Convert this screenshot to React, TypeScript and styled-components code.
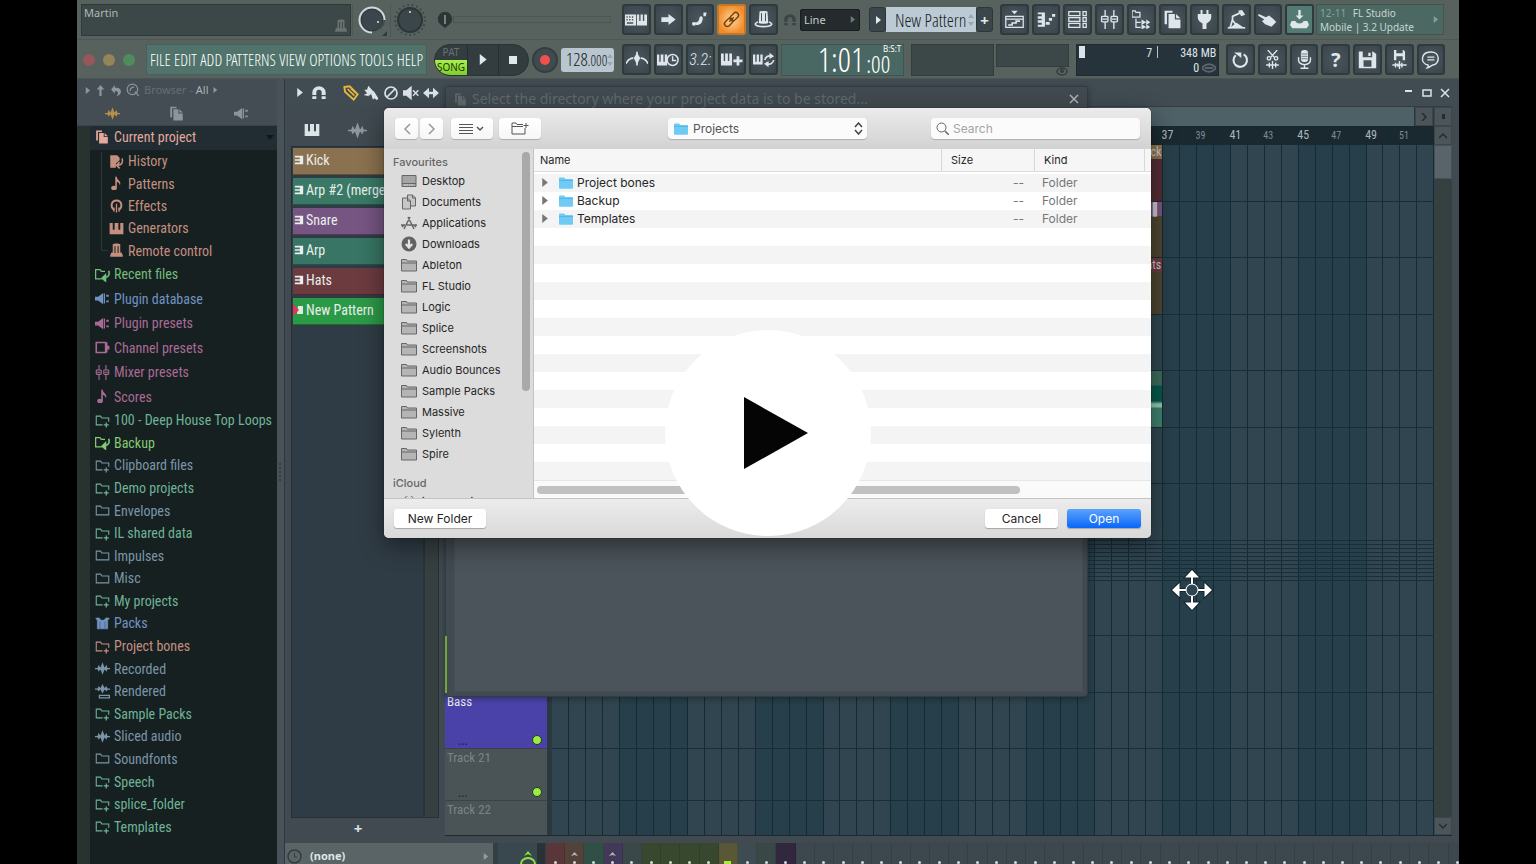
import React from "react";
import styled, { createGlobalStyle } from "styled-components";

const narrow = `"Roboto Condensed", Roboto, sans-serif`;
const slim = `"Open Sans Condensed Light", "Roboto Condensed", sans-serif`;
const wide = `"Noto Sans", "Open Sans", sans-serif`;
const mac = `Inter, "Liberation Sans", sans-serif`;

const Global = createGlobalStyle`
  * { box-sizing: border-box; }
  html, body { margin: 0; background: #000; }
  body { font-family: ${wide}; font-size: 12px; color: #dfe7e9; overflow: hidden; }
  button, input, select { font: inherit; color: inherit; margin: 0; padding: 0; border: 0; background: none; }
  ul { list-style: none; margin: 0; padding: 0; }
  a { color: inherit; text-decoration: none; }
  svg { display: block; flex: none; }
`;

/* ---------- icons ---------- */

const glyphs: Record<string, React.ReactNode> = {
  keyboardPiano: (<g fill="currentColor"><path d="M0 6h12v12H0z M1.5 8v1.5H3V8z M4.5 8v1.5H6V8z M7.500 8v1.500H9V8z M1.500 11v1.500H3V11z M4.500 11v1.500H6V11z M7.500 11v1.500H9V11z M2 14.500V16h7v-1.500z" fillRule="evenodd" /><path d="M13 6h2.500v7h1.500V6h2.500v7H21V6h3v12H13z" /></g>),
  arrowRight: <path d="M3 9h9V5l9 7-9 7v-4H3z" fill="currentColor" />,
  slide: (<g fill="currentColor"><path d="M4 16c5 0 7-1 8-6h4c0 7-4 9-8 9z" /><circle cx="5" cy="17.500" r="2.500" /><path d="M17 3h4l-1 5h-3z" /><circle cx="14" cy="10" r="2" /></g>),
  link: (<g fill="none" stroke="currentColor" strokeWidth="1.800" transform="rotate(-45 12 12)"><rect x="1" y="8.500" width="12" height="7" rx="3.500" /><rect x="11" y="8.500" width="12" height="7" rx="3.500" /><path d="M8 12h8" /></g>),
  hat: (<g><path d="M7 2c2-1 8-1 10 0l1 14c1 2-13 2-12 0z" fill="currentColor" /><path d="M5 15c-7 3-2 6 7 6s14-3 7-6" fill="none" stroke="currentColor" strokeWidth="2" /><path d="M9.500 4v10M14.500 4v10" stroke="#39434a" strokeWidth="1.200" /></g>),
  hatFlat: (<g><path d="M6 2c2-1.500 10-1.500 12 0v13h2l2 4v3H2v-3l2-4h2z" fill="currentColor" /><path d="M9.500 5v11M14.500 5v11" stroke="#3c4747" strokeWidth="1.600" /></g>),
  remote: (<g><path d="M6 2c2-1.500 10-1.500 12 0v13h2l2 4v3H2v-3l2-4h2z" fill="currentColor" /><path d="M9.500 5v11M14.500 5v11" stroke="#162021" strokeWidth="1.600" /></g>),
  metronome: (<g fill="none" stroke="currentColor" strokeWidth="1.800"><path d="M0 16c2-4 5-6 8-6M24 16c-2-4-5-6-8-6" /><path d="M12 3v15" /><path d="M12 6l2.500 4-2.500 5-2.500-5z" fill="currentColor" /></g>),
  pianoClock: (<g><path d="M0 6h2.500v8H4V6h3v8h1.500V6H11v12H0z" fill="currentColor" /><circle cx="17" cy="12" r="6" fill="none" stroke="currentColor" strokeWidth="1.600" /><path d="M17 8v4.500h4" fill="none" stroke="currentColor" strokeWidth="1.500" /></g>),
  pianoPlus: (<g fill="currentColor"><path d="M0 5h3v8h1.500V5h3v8H9V5h3v13H0z" /><path d="M17 8h3v3.500h3.500v3H20V18h-3v-3.500h-3.500v-3H17z" /></g>),
  pianoLoop: (<g><path d="M0 6h2.500v8H4V6h2.500v8H8V6h2.500v11H0z" fill="currentColor" /><path d="M13 12a5 5 0 0 1 7-4M22.500 12a5 5 0 0 1-7 4" fill="none" stroke="currentColor" strokeWidth="1.800" /><path d="M18 4l5 4-5 3zM17 20l-5-4 5-3z" fill="currentColor" /></g>),
  magnet: <path d="M3 20v-8a9 9 0 0 1 18 0v8h-6v-8a3 3 0 0 0-6 0v8z" fill="currentColor" />,
  magnetTipped: (<g fill="currentColor"><path d="M2 15v-4a10 9 0 0 1 20 0v4h-6v-4a4 4 0 0 0-8 0v4z" /><path d="M2 17h6v4H2zM16 17h6v4h-6z" /></g>),
  playlist: (<g fill="none" stroke="currentColor" strokeWidth="1.600"><path d="M1 8h22v14H1zM1 11.500h22" /><path d="M4 19h5v-2.500h5V14h5" strokeWidth="2" /><path d="M8 1h8l-4 4.500z" fill="currentColor" stroke="none" /></g>),
  pianoRoll: (<g fill="currentColor"><path d="M1 3h9v18H1v-2.500h5v-2.500H1V13h5v-2H1V8h5V5.500H1z" /><path d="M11 15h5v3.500h-5zM15 10h4v3.500h-4zM19 5h4v3.500h-4z" /></g>),
  rack: (<g fill="none" stroke="currentColor" strokeWidth="1.600"><path d="M1 2h14v5H1zM1 9.500h14v5H1zM1 17h14v5H1zM19 2h4v5h-4zM19 9.500h4v5h-4zM19 17h4v5h-4z" /></g>),
  mixer: (<g fill="none" stroke="currentColor" strokeWidth="1.700"><path d="M6.500 0v8M6.500 15v9M17.500 0v8M17.500 15v9" /><rect x="2" y="8" width="8" height="7" rx="1" /><rect x="14" y="8" width="8" height="7" rx="1" /><path d="M3 11.500h6M15 11.500h6" /></g>),
  tree: (<g fill="none" stroke="currentColor" strokeWidth="1.600"><path d="M0 1h4l1 2h5v6H0zM5 11v11h6M5 15.500h6" /><path d="M12 12l6 3.500-6 3.500zM18 12l5 3.500-5 3.500zM12 18l6 3.500-6 3zM18 18l5 3.500-5 3z" fill="currentColor" stroke="none" /></g>),
  docs: (<g fill="currentColor"><path d="M2 1h10v2.500H5V18H2z" /><path d="M7 5h8v7h7v11H7z" /><path d="M16.500 5L22 10.500h-5.500z" /></g>),
  plug: (<path d="M7 0h2.500v5h5V0H17v5h3.500v4c0 4-3 6-6 8v7h-5v-7c-3-2-6-4-6-8V5H7z" fill="currentColor" />),
  crane: (<g fill="none" stroke="currentColor" strokeWidth="2.200"><path d="M18 3L7 8v5l4 5M7 12L4 22" /><path d="M14 1l5-1 4 6-5 2z" fill="currentColor" stroke="none" /><path d="M1 22.500h22" strokeWidth="2" /><path d="M4 22l8-6 9 6z" fill="currentColor" stroke="none" /></g>),
  hand: (<path d="M1 5l9 4 4-2 5 4 4 4-6 6-8-3-4-4 3-2-8-5z" fill="currentColor" />),
  download: (<g fill="currentColor"><path d="M10.500 0h3v7H17l-5 5-5-5h3.500z" /><path d="M2 14h5c0 4 10 4 10 0h5l2 5-3 4H3l-3-4z" /></g>),
  undo: (<g><path d="M6 6.500a8.500 8.500 0 1 0 10-1" fill="none" stroke="currentColor" strokeWidth="2.600" /><path d="M4 3h9v7z" fill="currentColor" /></g>),
  cut: (<g fill="none" stroke="currentColor" strokeWidth="1.700"><path d="M6 0l8 9M18 0l-8 9" /><circle cx="7.500" cy="10.500" r="2.200" /><circle cx="16.500" cy="10.500" r="2.200" /><path d="M4 19h16M8 16v6M12 14v10M16 16v6" /></g>),
  mic: (<g><rect x="7.500" y="0" width="9" height="15" rx="4" fill="currentColor" /><path d="M4.500 9v4a7.500 5.500 0 0 0 15 0V9M12 18v5M7 23h10" fill="none" stroke="currentColor" strokeWidth="1.800" /><path d="M8 5h8M8 8h8M8 11h8" stroke="#5a666d" /></g>),
  save: (<path d="M1 2h18l4 3v18H1zM6 2v7h12V2zM5 13v10M7 13v8h10v-8zM13 3.500h3v4h-3z" fill="currentColor" fillRule="evenodd" />),
  saveWave: (<g><path d="M5 0h12l2 2v11H5zM8 0v4h8V0zM8 8v5h8V8z" fill="currentColor" fillRule="evenodd" /><path d="M3 19h18M7 16v6M10 17v4M12 14v10M15 16v6M18 18v2" stroke="currentColor" strokeWidth="1.800" /></g>),
  chat: (<g fill="none" stroke="currentColor" strokeWidth="1.800"><path d="M9 19c-10-2-10-16 3-16.500S24 18 15 19c-2 .5-4 3-7 3.500 1-1 1.500-2.500 1-3.500z" /><path d="M8 9h9M8 12.500h9" /></g>),
  up: <path d="M12 2l7 8h-5v12h-4V10H5z" fill="currentColor" />,
  back: (<path d="M9 2v5c8-1 12 3 11 8-1 5-4 6-8 7 4-4 4-9-3-9v5L2 10z" fill="currentColor" />),
  searchDoc: (<g fill="none" stroke="currentColor" strokeWidth="2"><circle cx="11" cy="11" r="9" /><path d="M15 15l7 7M7 14c0-5 3-7 7-7" /></g>),
  wave: (<path d="M0 11h4l2-5 2 4h1l3-8 3 8h1l2-4 2 5h4v2h-4l-2 4-2-3h-1l-3 8-3-8H8l-2 3-2-4H0z" fill="currentColor" />),
  plugin: (<g fill="currentColor"><path d="M0 9h5l8-6v18l-8-6H0z" /><path d="M14 4h2v16h-2zM18 6h4v3h-4zM18 15h4v3h-4z" /></g>),
  pencil: (<g fill="none" stroke="currentColor" strokeWidth="2.800"><path d="M2 3l8-1 12 12-6 8L3 10z" /><path d="M7 6l10 10M12 5l7 7" strokeWidth="2.400" /></g>),
  brush: (<g fill="currentColor"><path d="M8 1l8 9-7 6-7-9 4 0z" /><path d="M12 13l4-4 7 11-2 3-4-3-2 2z" /><path d="M1 15l6-3 2 5z" /></g>),
  ban: (<g fill="none" stroke="currentColor" strokeWidth="2.600"><circle cx="12" cy="12" r="9" /><path d="M6 18L18 6" /></g>),
  mute: (<g><path d="M0 8h5l8-7v22l-8-7H0z" fill="currentColor" /><path d="M15 8l8 8M23 8l-8 8" stroke="currentColor" strokeWidth="2.200" /></g>),
  slip: <path d="M9 4v6h6V4l9 8-9 8v-6H9v6l-9-8z" fill="currentColor" />,
  piano: <path d="M1 3h5v11h3V3h6v11h3V3h5v18H1z" fill="currentColor" />,
  history: (<g><path d="M2 2h11l4 4v4l-6 5v7H2z" fill="currentColor" /><path d="M21 7c2 7-1 11-7 11M17 13l-5 5 5 5" fill="none" stroke="currentColor" strokeWidth="2.500" /></g>),
  note: (<g fill="currentColor"><ellipse cx="8" cy="19" rx="4.500" ry="3.500" /><path d="M10 1h2.500c0 6 8 6 5 14-1-5-3-5-5-6v10H10z" /></g>),
  effects: (<g fill="none" stroke="currentColor" strokeWidth="3"><path d="M8 19c-6-4-5-15 4-15s10 11 4 15" /><path d="M12 9v14M8 15v7M16 15v7" strokeWidth="2" /></g>),
  folder: <path d="M2 19V5h7l2 3h11v11z" fill="none" stroke="currentColor" strokeWidth="1.700" />,
  folderPlus: (<g fill="none" stroke="currentColor" strokeWidth="1.700"><path d="M12 19H2V5h7l2 3h11v6" /><path d="M18 15v8M14 19h8" strokeWidth="2" /></g>),
  folderBack: (<g fill="none" stroke="currentColor" strokeWidth="2"><path d="M11 19H1V4h7l2 3h6" /><path d="M22 6c2 7-1 10-6 11" strokeWidth="2.600" /><path d="M17 12l-6 6 6 5z" fill="currentColor" /></g>),
  channel: (<g><path d="M2 4h15v16H2z" fill="none" stroke="currentColor" strokeWidth="2.500" /><path d="M17 4h3v5h3v6h-3v5h-3z" fill="currentColor" /></g>),
  packs: <path d="M0 3l6-1 4 4h4l4-4 6 1-3 4v14H3V7z M8 9v11 M16 9v11" fill="currentColor" stroke="#151f20" strokeWidth="0.600" />,
  rendered: (<g><path d="M0 7h4l2-4 2 3h1l3-6 3 6h1l2-3 2 4h4v2h-4l-2 3-2-3h-1l-3 6-3-6H8l-2 3-2-3H0z" fill="currentColor" /><path d="M7 18h16v4H7z" stroke="currentColor" strokeWidth="2" fill="none" /></g>),
  clip: (<g fill="currentColor"><path d="M2 2h20v20H2v-4h12v-4H2v-4h12V6H2z" /></g>),
};

const Icon = ({ name, size = 18 }: { name: string; size?: number }) => (
  <svg width={size} height={size} viewBox="0 0 24 24" aria-hidden="true">{glyphs[name]}</svg>
);

const Tri = ({ size = 8 }: { size?: number }) => (
  <svg width={size} height={size} viewBox="0 0 8 8" aria-hidden="true"><path d="M2 0l5 4-5 4z" fill="currentColor" /></svg>
);

const Spin = () => (
  <svg width="6" height="14" viewBox="0 0 6 14" aria-hidden="true"><path d="M0 5l3-4 3 4zM0 9l3 4 3-4z" fill="#98a7b0" /></svg>
);

/* ---------- shell ---------- */

const Page = styled.div`
  height: 100vh; padding: 0 77px; background: #000; overflow: hidden;
`;
const Studio = styled.div`
  position: relative; height: 100%; display: flex; flex-direction: column;
  background: #404a50; overflow: hidden;
`;

/* ---------- top toolbar ---------- */

const TopBar = styled.header`
  flex: none; height: 79px; background: #57625f; border-bottom: 1px solid #4b5556;
`;
const BarRow = styled.div`
  display: flex; align-items: center; height: 39px;
  & + & { border-top: 1px solid #4d5857; height: 40px; }
`;
const Hint = styled.div`
  flex: 0 0 270px; height: 32px; margin: 0 1px 0 4px; padding: 0 2px 0 2px; display: flex;
  justify-content: space-between; background: #3c4747; border: 1px solid #2f3939;
  font-size: 11px; line-height: 16px; color: #aeb8b8;
  svg { align-self: flex-end; color: #68726f; margin-bottom: 2px; }
`;
const KnobCell = styled.div<{ $w: number }>`
  flex: 0 0 ${(p) => p.$w}px; display: flex; justify-content: center; border-left: 1px solid #4d5857;
`;
const Slider = styled.div`
  position: relative; flex: 0 0 179px; margin-left: 7px; height: 20px; display: flex; align-items: center;
  &::before { content: ""; margin-left: 18px; width: 156px; height: 5px; border: 1px solid #4a5554; }
  svg { position: absolute; left: 2px; top: 2px; }
`;
const Tools = styled.div<{ $w: number; $gap?: number }>`
  flex: 0 0 ${(p) => p.$w}px; margin-left: ${(p) => p.$gap ?? 8}px; display: flex; gap: 3px;
`;
const Tool = styled.button<{ $tone?: "hot" | "teal" }>`
  flex: 1 1 0; min-width: 0; height: 31px; display: flex; align-items: center; justify-content: center;
  border: 2px solid ${(p) => (p.$tone === "hot" ? "#c0782e" : "#2e3a3e")}; border-radius: 3px;
  background: ${(p) => p.$tone === "hot" ? "radial-gradient(#ffd7a0, #f08d2a 75%)" : p.$tone === "teal" ? "#547b73" : "radial-gradient(#4a565e, #3a454b)"};
  color: ${(p) => (p.$tone === "hot" ? "#7a3f08" : "#dfe6ea")};
`;
const Digits = styled.span`font: italic 300 16px/20px ${narrow};`;
const Question = styled.span`font: bold 20px/24px ${wide};`;
const SnapIcon = styled.div`margin-left: 5px; color: #3a4445;`;
const SnapBox = styled.label`
  flex: 0 0 60px; height: 22px; margin-left: 3px; padding: 0 3px; display: flex; align-items: center;
  background: #252b2d; border: 1px solid #171c1e; border-radius: 2px; color: #6d777a;
  select { flex: 1; width: 0; appearance: none; color: #c3cbcd; font-size: 11px; }
`;
const PatternBox = styled.div`
  display: flex; flex: 0 0 124px; width: 124px; height: 25px; margin-left: 9px;
`;
const PatternStep = styled.button`
  flex: 0 0 17px; display: flex; align-items: center; justify-content: center; font: bold 15px/20px ${wide};
  background: #3b464b; border: 1px solid #2c373b; border-radius: 3px; color: #e4eaec;
`;
const PatternName = styled.label`
  flex: 1; min-width: 0; padding: 0 2px 0 9px; display: flex; align-items: center; background: #bccbd3; color: #18222a;
  input { flex: 1; width: 0; font: 18px/24px ${slim}; }
`;
const News = styled.a`
  flex: 0 1 128px; margin-left: 2px; height: 31px; display: flex; align-items: center; justify-content: space-between;
  padding: 0 4px 0 3px; background: #4b6862; border: 1px solid #40574f;
  font: 10px/14px ${wide}; color: #c8d6d4; white-space: nowrap;
  em { font-style: normal; color: #8aa19c; margin-right: 4px; }
  svg { color: #83a09a; }
`;
const Lights = styled.div`
  display: flex; gap: 8px; margin-left: 6px;
  i { width: 12px; height: 12px; border-radius: 50%; background: #95575a; }
  i:nth-child(2) { background: #94845a; }
  i:nth-child(3) { background: #4f8c5c; }
`;
const Menu = styled.nav`
  flex: 0 0 281px; min-width: 0; height: 31px; margin-left: 11px; padding: 0 3px; display: flex; align-items: center;
  justify-content: space-between; background: #51736b; border: 1px solid #466159; color: #fff;
  font: 16px/20px ${slim};
`;
const Transport = styled.div`
  flex: 0 0 95px; height: 32px; margin-left: 7px; display: flex; border-radius: 16px; overflow: hidden;
  background: #333d40; border: 1px solid #2a3436; color: #e2e8ea;
`;
const ModeSwitch = styled.div`
  flex: 0 0 32px; display: flex; flex-direction: column; text-align: center; font: 10px/15px ${wide}; color: #667174;
`;
const Mode = styled.button<{ $on?: boolean }>`
  flex: 1; text-align: center; white-space: nowrap;
  ${(p) => p.$on && "background: linear-gradient(#a8f04c, #7fce2c); color: #1f3808;"}
`;
const TransportKey = styled.button`
  flex: 1; display: flex; align-items: center; justify-content: center; border-left: 1px solid #252e30;
`;
const RecordKey = styled.button`
  flex: 0 0 26px; height: 26px; margin-left: 3px; border-radius: 50%; background: #414b4f;
  border: 2px solid #343e41; display: flex; align-items: center; justify-content: center;
  &::after { content: ""; width: 10px; height: 10px; border-radius: 50%; background: #f2504c; }
`;
const Tempo = styled.div`
  flex: 0 0 53px; height: 24px; margin-left: 3px; padding: 0 1px 0 5px; border-radius: 3px; background: #b9c6cf;
  color: #111b22; font: 18px/24px ${slim}; white-space: nowrap; display: flex; align-items: center; justify-content: space-between;
  small { font-size: 14px; }
`;
const Clock = styled.div`
  flex: 0 0 123px; height: 32px; margin-left: 3px; padding-right: 2px; display: flex; align-items: center; justify-content: flex-end;
  background: #4a6863; border: 1px solid #3d5552; color: #fff; font: 33px/30px ${slim};
`;
const ClockTail = styled.div`
  display: flex; flex-direction: column; justify-content: flex-end; height: 30px; margin-left: 2px;
  sup { font: 8px/8px ${wide}; align-self: flex-end; }
  small { font-size: 24px; line-height: 22px; padding-right: 11px; }
`;
const Scope = styled.div`
  flex: 0 0 83px; height: 32px; margin-left: 7px; background: #3c4847; border: 1px solid #323d3c;
`;
const PeakCell = styled.div`
  height: 32px; margin-left: 2px; display: flex; flex-direction: column; align-items: flex-end; flex: 0 0 73px;
  color: #333d3e;
`;
const PeakScreen = styled.div`align-self: stretch; height: 23px; background: #3c4847; border: 1px solid #323d3c;`;
const Stats = styled.div`
  flex: 0 0 143px; height: 32px; margin-left: 7px; padding: 1px 2px; display: grid; grid-template-columns: 8px 1fr 58px;
  background: #27333b; border: 1px solid #1f2a31; font: 12px/15px ${narrow}; color: #dde4e8; text-align: right;
  i { width: 6px; height: 12px; background: #dbe2e8; }
  b { font-weight: 400; border-right: 1px solid #b8c2c8; padding-right: 5px; height: 12px; }
`;
const Polys = styled.div`
  grid-column: 3; display: flex; justify-content: flex-end; align-items: center; gap: 3px;
  svg { color: #59656b; }
`;

/* ---------- main columns ---------- */

const Main = styled.main`flex: 1; min-height: 0; display: flex;`;
const Browser = styled.aside`
  flex: 0 0 200px; display: flex; flex-direction: column; background: #434d53;
`;
const BrowserHead = styled.div`
  flex: none; height: 22px; padding: 0 7px; display: flex; align-items: center; gap: 3px; color: #8c979b;
  font: 11px/16px ${wide};
  span { color: #656f74; margin-left: 1px; }
  b { font-weight: 400; color: #a9b3b6; }
`;
const BrowserTabs = styled.div`
  flex: none; height: 25px; display: flex; justify-content: space-around; align-items: center; color: #8b959a;
  padding: 0 3px; border-bottom: 1px solid #39444a;
  button:first-child { color: #b78f4c; }
`;
const BrowserBody = styled.div`flex: 1; padding-left: 13px; background: #28322f;`;
const BrowserTree = styled.div`height: 100%; background: #162021;`;
const CurrentRow = styled.div`
  height: 24px; padding: 0 3px 2px 5px; display: flex; align-items: center; gap: 5px; background: #222d33;
  color: #e3a99a; font: 14px/20px ${narrow};
  span { flex: 1; }
  svg:last-child { color: #0e1719; }
`;
const Group = styled.ul<{ $h: number; $nested?: boolean }>`
  position: relative; height: ${(p) => p.$h}px; display: grid; grid-auto-rows: 1fr;
  margin-left: ${(p) => (p.$nested ? 14 : 0)}px;
  ${(p) => p.$nested && "&::before { content: ''; position: absolute; left: -3px; top: 2px; bottom: 11px; width: 6px; border-left: 1px solid #2c3839; border-bottom: 1px solid #2c3839; }"}
`;
const Entry = styled.li<{ $c: string }>`
  min-height: 0; display: flex; align-items: center; gap: 4px; padding-left: 5px;
  color: ${(p) => p.$c}; font: 14px/20px ${narrow}; white-space: nowrap;
`;
const Splitter = styled.div`
  flex: 0 0 8px; border-right: 1px solid #2d383e; background: #485258; display: flex; align-items: center; justify-content: center;
  &::after { content: ""; width: 2px; height: 18px; border-left: 2px dotted #333d43; }
`;

/* ---------- playlist window ---------- */

const PlaylistWindow = styled.section`flex: 1; min-width: 0; display: flex; flex-direction: column;`;
const TitleBar = styled.div`
  flex: none; height: 27px; padding: 0 9px 0 10px; display: flex; align-items: center; color: #dce3e7;
  background: #404b52;
`;
const TitleTools = styled.div`flex: 1; display: flex; align-items: center; gap: 4px;`;
const TitleTool = styled.button<{ $c?: string; $space?: number }>`
  color: ${(p) => p.$c ?? "#dce3e7"}; margin-right: ${(p) => p.$space ?? 0}px;
`;
const WindowKeys = styled.div`display: flex; align-items: center; gap: 8px;`;
const PlaylistBody = styled.div`flex: 1; min-height: 0; display: flex; padding-right: 7px;`;
const Picker = styled.div`flex: 0 0 160px; display: flex; flex-direction: column; padding: 0 6px;`;
const PickerTabs = styled.div`
  flex: none; height: 40px; padding: 8px 13px 0; display: flex; gap: 28px; align-items: center; color: #dce3e7;
  button + button { color: #8d989e; }
`;
const PickerBox = styled.div`
  flex: 1; display: flex; border: 1px solid #242f36; background: #303c45;
  &::after { content: ""; flex: 0 0 13px; background: #364041; border-left: 2px solid #28333a; }
`;
const PatternList = styled.ul`flex: 1; min-width: 0; padding: 1px; display: grid; gap: 3px; align-content: start;`;
const Pattern = styled.li<{ $c: string; $on?: boolean }>`
  height: 27px; display: flex; align-items: center; gap: 2px; padding: 0 0 2px ${(p) => (p.$on ? 0 : 1)}px;
  background: ${(p) => p.$c}; color: #e9eeec; font: 14px/20px ${narrow}; white-space: nowrap; overflow: hidden;
  border-bottom: 1px solid rgba(0, 0, 0, 0.3);
`;
const AddPattern = styled.button`
  flex: none; height: 25px; font: bold 15px/18px ${wide}; padding: 0 14px 5px 0; color: #dce3e7;
`;
const Arrange = styled.div`
  flex: 1; min-width: 0; display: flex; flex-direction: column; margin-bottom: 7px; border-bottom: 1px solid #1d2a31;
`;
const MiniMap = styled.div`
  flex: none; height: 20px; display: flex; gap: 1px; background: #2d383e; border-top: 1px solid #333e44;
  &::before { content: ""; flex: 1; background: #4d6166; }
`;
const ScrollKey = styled.button`
  flex: 0 0 18px; height: 19px; display: flex; align-items: center; justify-content: center; color: #222c31;
  background: #4b555a; border: 1px solid #3b454a;
`;
const ScrollFace = styled.div`flex: none; display: flex;`;
const Ruler = styled.ol`
  flex: 1; margin: 0; height: 19px; padding: 0 1px 0 106px; list-style: none; display: flex; background: #1a2930;
`;
const Bar = styled.li<{ $major: boolean }>`
  flex: 1 1 0; min-width: 0; overflow: hidden; font: ${(p) => (p.$major ? 12 : 10)}px/19px ${narrow};
  color: ${(p) => (p.$major ? "#a9b7bc" : "#7b8d94")};
`;
const TrackArea = styled.div`flex: 1; min-height: 0; display: flex;`;
const TrackLabels = styled.div`
  flex: 0 0 107px; display: flex; flex-direction: column; border-right: 5px solid #2a3940; background: #414b4f;
  overflow: hidden;
`;
const TrackLabel = styled.div<{ $h: number; $c: string; $ink?: string }>`
  flex: 0 0 ${(p) => p.$h}px; padding: 0 5px 0 2px; position: relative; background: ${(p) => p.$c};
  border-bottom: 1px solid #39444a; color: ${(p) => p.$ink}; font: 13px/17px ${narrow}; overflow: hidden;
`;
const TrackDots = styled.span`position: absolute; left: 13px; bottom: 0; color: rgba(0, 0, 0, 0.55); font: 12px/14px ${wide};`;
const TrackLed = styled.i`
  position: absolute; right: 5px; bottom: 3px; width: 10px; height: 10px; border-radius: 50%;
  background: #9bea45; border: 1px solid #1f3d12;
`;
const Canvas = styled.div`position: relative; flex: 1; min-width: 0; overflow: hidden; display: flex;`;
const GridCol = styled.i<{ $dark: boolean }>`
  flex: 1 1 0; background: ${(p) => (p.$dark ? "#273f4a" : "#304550")}; border-right: 1px solid #142a34;
`;
const Lanes = styled.div`position: absolute; inset: 0; display: flex; flex-direction: column;`;
const Lane = styled.div<{ $h: number }>`
  flex: 0 0 ${(p) => p.$h}px; border-bottom: 1px solid #182e38; position: relative;
`;
const Clip = styled.div<{ $head: string; $body: string }>`
  position: absolute; top: 0; bottom: 0; left: 62%; width: 7.2%; background: ${(p) => p.$body};
  color: #cfc6c8; font: 12px/14px ${narrow}; text-align: right; padding-right: 0;
  span { display: block; height: 14px; padding-right: 1px; background: ${(p) => p.$head}; }
`;
const VScroll = styled.div`
  flex: 0 0 18px; display: flex; flex-direction: column; justify-content: space-between; background: #354041;
  &::before { content: ""; height: 32px; background: #59646a; border: 1px solid #465157; }
`;

/* ---------- mixer strip ---------- */

const MixerStrip = styled.footer`flex: none; height: 21px; display: flex; background: #343f44;`;
const Target = styled.div`
  flex: 0 0 208px; display: flex; align-items: center; gap: 8px; padding: 5px 4px 0 2px; background: #5a6466; color: #dfe6e7;
  font: bold 11px/16px ${wide}; white-space: nowrap;
  span { flex: 1; }
  svg { color: #323c40; }
  svg:last-child { color: #929da0; }
`;
const Master = styled.div`
  flex: 0 0 47px; margin: 0 1px 0 5px; display: flex; justify-content: center; background: #39474e; color: #94e23c;
  border-right: 8px solid #283237; align-items: flex-end; padding-left: 20px;
`;
const Insert = styled.div<{ $c: string; $on?: boolean }>`
  flex: 0 0 1.636%; display: flex; flex-direction: column; justify-content: flex-end; align-items: center;
  background: ${(p) => p.$c}; color: #b9b3b6; border-right: 1px solid rgba(0, 0, 0, 0.12);
  &::after { content: ""; width: ${(p) => (p.$on ? 7 : 3)}px; height: 3px; margin-top: 5px; background: ${(p) => (p.$on ? "#a5ef3c" : "#d3dadd")}; border-radius: ${(p) => (p.$on ? 0 : 2)}px; }
`;

/* ---------- studio dialog behind the file chooser ---------- */

const StudioDialog = styled.section`
  position: absolute; top: 86px; left: 50%; margin-left: -323px; width: 643px; height: 611px; padding: 0 4px 4px 8px;
  display: flex; flex-direction: column; background: #414a50; border: 1px solid #323c43; border-radius: 0 0 4px 4px;
  box-shadow: 0 2px 6px rgba(0, 0, 0, 0.3);
  &::before { content: ""; position: absolute; left: -1px; top: 549px; height: 57px; border-left: 2px solid #72a936; }
`;
const StudioDialogHead = styled.div`
  flex: 0 0 24px; display: flex; align-items: center; gap: 5px; color: #5f696f; font: 14px/20px ${wide};
  span { flex: 1; }
  button { color: #adb6bb; padding-right: 4px; }
`;
const StudioDialogBody = styled.div`flex: 1; background: #4b545b; border: 1px solid #454e55;`;

/* ---------- file chooser ---------- */

const Chooser = styled.section`
  position: absolute; top: 108px; left: 50%; margin-left: -384px; width: 767px; height: 430px; display: flex; flex-direction: column;
  border-radius: 5px; overflow: hidden; background: #fff; color: #262626; font: 11px/16px ${mac};
  box-shadow: 0 8px 24px rgba(0, 0, 0, 0.45), 0 0 1px #000;
`;
const ChooserBar = styled.div`
  flex: 0 0 41px; padding: 0 11px; display: flex; align-items: center; background: linear-gradient(#ebebeb, #d2d2d2);
`;
const MacKey = styled.button<{ $w: number; $gap?: number }>`
  flex: 0 0 ${(p) => p.$w}px; height: 21px; margin-left: ${(p) => p.$gap ?? 0}px; display: flex; align-items: center; justify-content: center;
  background: linear-gradient(#fff, #f6f6f6); border-radius: 4px; box-shadow: 0 1px 1px rgba(0, 0, 0, 0.2); color: #555;
`;
const PlaceBox = styled.label`
  flex: 0 0 199px; height: 21px; margin: 0 64px 0 auto; padding: 0 4px 0 5px; display: flex; align-items: center; gap: 4px;
  background: #fbfbfb; border-radius: 4px; box-shadow: 0 1px 1px rgba(0, 0, 0, 0.2);
`;
const PlaceSelect = styled.select`flex: 1; width: 0; appearance: none; font: 12px/18px ${mac}; color: #555; outline: 0;`;
const SearchBox = styled.label`
  flex: 0 0 209px; height: 21px; padding: 0 5px; display: flex; align-items: center; gap: 4px; color: #666;
  background: #fbfbfb; border-radius: 4px; box-shadow: 0 1px 1px rgba(0, 0, 0, 0.2);
  input { flex: 1; width: 0; font: 12px/18px ${mac}; }
  input::placeholder { color: #a5a5a5; opacity: 1; }
`;
const ChooserBody = styled.div`flex: 1; min-height: 0; display: flex;`;
const Places = styled.div`
  position: relative; flex: 0 0 150px; padding: 6px 0 0 9px; background: #dcdcdc; border-right: 1px solid #c2c2c2; overflow: hidden;
  &::after { content: ""; position: absolute; right: 3px; top: 3px; width: 8px; height: 239px; border-radius: 4px; background: #a9a9a9; }
`;
const PlacesTitle = styled.h2`margin: 0; font: 500 11px/14px ${mac}; color: #666;`;
const PlacesList = styled.ul`
  padding: 0 0 0 8px; margin-top: 1px;
  li { height: 21px; display: flex; align-items: center; gap: 5px; white-space: nowrap; }
  svg { color: #666; }
  & + h2 { margin-top: 12px; }
`;
const Files = styled.div`flex: 1; min-width: 0; display: flex; flex-direction: column;`;
const FileTable = styled.table`
  width: 100%; height: 335px; border-collapse: collapse; table-layout: fixed;
  thead::after { content: ""; display: block; height: 2px; }
  th { height: 22px; padding: 0 6px; text-align: left; font-weight: 400; background: #f6f6f6; border-bottom: 1px solid #ddd; }
  th + th { padding: 0 10px; box-shadow: inset 1px 0 #d8d8d8; }
  tbody td { height: 18px; padding: 0; color: #777; white-space: nowrap; font-size: 12px; line-height: 14px; }
  td:nth-child(2) { text-align: right; padding-right: 10px; }
  td:nth-child(3) { padding-left: 8px; }
  tbody tr:nth-child(odd) { background: #f4f4f4; }
`;
const FileName = styled.span`
  display: flex; align-items: center; gap: 3px; padding-left: 6px; color: #262626; font: 12px/14px ${mac};
  svg:first-child { color: #777; margin-right: 6px; }
`;
const HScroll = styled.div`
  flex: 1; padding: 5px 3px; background: #fafafa; border-top: 1px solid #e6e6e6;
  &::before { content: ""; display: block; width: 79%; height: 8px; border-radius: 4px; background: #c1c1c1; }
`;
const ChooserFoot = styled.div`
  flex: 0 0 40px; padding: 0 10px; display: flex; align-items: center; background: linear-gradient(#ececec, #d9d9d9);
  border-top: 1px solid #c4c4c4;
`;
const FootKey = styled.button<{ $w: number; $main?: boolean }>`
  flex: 0 0 ${(p) => p.$w}px; height: 19px; border-radius: 3px; font: 12px/18px ${mac};
  background: ${(p) => (p.$main ? "linear-gradient(#5ba4fa, #0a66fb)" : "#fff")};
  color: ${(p) => (p.$main ? "#fff" : "#262626")}; box-shadow: 0 1px 1px rgba(0, 0, 0, 0.25);
  &:nth-child(2) { margin-left: auto; margin-right: 9px; }
`;
const PlayButton = styled.button`
  position: absolute; left: 50%; top: 330px; width: 206px; height: 206px; margin-left: -103px; border-radius: 50%;
  background: #fff; display: flex; align-items: center; justify-content: center; padding-left: 15px;
`;
const Cursor = styled.div`position: absolute; left: 1094px; top: 569px;`;

/* ---------- data ---------- */

const salmon = "#c58f80", green = "#72bd78", blue = "#7193c2", pink = "#aa6a97", teal = "#6fb397", slate = "#7b95a8";
type Row = [string, string, string];
const nested: Row[] = [
  ["history", "History", salmon], ["note", "Patterns", salmon], ["effects", "Effects", salmon],
  ["piano", "Generators", salmon], ["remote", "Remote control", salmon],
];
const library: Row[] = [
  ["folderBack", "Recent files", green], ["plugin", "Plugin database", blue], ["plugin", "Plugin presets", pink],
  ["channel", "Channel presets", pink], ["mixer", "Mixer presets", pink], ["note", "Scores", pink],
];
const folders: Row[] = [
  ["folderPlus", "100 - Deep House Top Loops", teal], ["folderBack", "Backup", "#86c872"],
  ["folderPlus", "Clipboard files", slate], ["folderPlus", "Demo projects", teal], ["folder", "Envelopes", slate],
  ["folderPlus", "IL shared data", teal], ["folder", "Impulses", slate], ["folder", "Misc", slate],
  ["folderPlus", "My projects", teal], ["packs", "Packs", blue], ["folderPlus", "Project bones", salmon],
  ["wave", "Recorded", slate], ["rendered", "Rendered", slate], ["folderPlus", "Sample Packs", teal],
  ["wave", "Sliced audio", slate], ["folder", "Soundfonts", slate], ["folderPlus", "Speech", teal],
  ["folderPlus", "splice_folder", teal], ["folderPlus", "Templates", teal],
];
const patterns = [
  ["Kick", "#8a7250"], ["Arp #2 (merge", "#397965"], ["Snare", "#765582"], ["Arp", "#387564"],
  ["Hats", "#6c3b40"], ["New Pattern", "#2b9a47"],
];
const upperLanes = [57, 56, 57, 56, 57, 56, 57, ...Array(10).fill(4), 55, 57];
const laneHeights = [...upperLanes, 56, 52];
const arpBody = "linear-gradient(#3d6a5c 14px, #07574c 15px, #07574c 30px, #8fc7b2 33px, #8fc7b2 36px, #3f806d 37px)";
const clips: Record<number, [string, string, string]> = {
  0: ["Kick", "#8a7250", "#542c33"], 1: ["▌", "#765582", "#4f4631"], 2: ["Hats", "#6c3b40", "#4f4631"], 4: ["", "transparent", arpBody],
};
const places = ["Ableton", "FL Studio", "Logic", "Splice", "Screenshots", "Audio Bounces", "Sample Packs", "Massive", "Sylenth", "Spire"];
const inserts = [
  "#58363a", "#53413a", "#305046", "#41385a", "#3b4849", "#38482f", "#38482f", "#38482f", "#38482f", "#595735",
  "#3e4b53", "#3a4747", "#31283d", ...Array(35).fill("#3c484d"),
];

/* ---------- small drawings ---------- */

const BlueFolder = () => (
  <svg width="16" height="14" viewBox="0 0 16 14" aria-hidden="true"><path d="M1 2.500q0-1 1-1h4l1.500 1.500H14q1 0 1 1v8q0 .8-1 .8H2q-1 0-1-.8z" fill="#6dcbf6" /><path d="M1 4.500h14" stroke="#56b5e6" /></svg>
);
const GreyFolder = () => (
  <svg width="16" height="14" viewBox="0 0 16 14" aria-hidden="true"><path d="M.5 13V1.500h5l1 1.500h9v10z" fill="#b5b5b5" stroke="currentColor" /><path d="M.5 5h15" stroke="currentColor" /></svg>
);
const Desktop = () => (
  <svg width="16" height="14" viewBox="0 0 16 14" aria-hidden="true"><path d="M1 1.500h14v11H1z" fill="#a5a5a5" stroke="currentColor" /><path d="M1 9.500h14" stroke="currentColor" /><path d="M3 11h10" stroke="#ddd" strokeDasharray="1.500 1" /></svg>
);
const Documents = () => (
  <svg width="16" height="16" viewBox="0 0 16 16" fill="#c6c6c6" stroke="currentColor" aria-hidden="true"><path d="M6.500 1h5l3 3v8h-8z" /><path d="M1.500 4h5l3 3v8h-8z" /><path d="M6.500 4v3h3M11.500 1v3h3" fill="none" /></svg>
);
const Applications = () => (
  <svg width="16" height="16" viewBox="0 0 16 16" fill="none" stroke="currentColor" strokeWidth="1.500" aria-hidden="true"><path d="M9 2L3 14M7 2l6 12M0 10h4M6 10h10M1 12l2-2M15 12l-2-2" /></svg>
);
const Downloads = () => (
  <svg width="16" height="16" viewBox="0 0 16 16" aria-hidden="true"><circle cx="8" cy="8" r="7.500" fill="#626262" /><path d="M8 3.500v7M4.800 8L8 11.500 11.200 8" stroke="#e3e3e3" strokeWidth="2.200" fill="none" /></svg>
);

const EntryList = ({ rows, h, nest }: { rows: Row[]; h: number; nest?: boolean }) => (
  <Group $h={h} $nested={nest}>
    {rows.map(([icon, label, c]) => (
      <Entry key={label} $c={c}><Icon name={icon} size={15} />{label}</Entry>
    ))}
  </Group>
);

const broad = ["pianoClock", "pianoPlus", "pianoLoop", "keyboardPiano", "metronome"];

const toolRow = (names: string[]) =>
  names.map((n) => (
    <Tool key={n} aria-label={n} $tone={n === "link" ? "hot" : n === "download" ? "teal" : undefined}>
      {n === "digits" ? <Digits>3.2:</Digits> : n === "help" ? <Question>?</Question> : <Icon name={n} size={broad.includes(n) ? 22 : 19} />}
    </Tool>
  ));

export default function App() {
  return (
    <Page>
      <Global />
      <Studio>
        <TopBar>
          <BarRow>
            <Hint>Martin<Icon name="hatFlat" size={14} /></Hint>
            <KnobCell $w={38}>
              <svg width="32" height="32" viewBox="0 0 32 32" aria-hidden="true"><circle cx="16" cy="16" r="11" fill="#3b464c" stroke="#2c363b" /><path d="M16 28.500A12.500 12.500 0 1 1 28.500 16" fill="none" stroke="#cfd9de" strokeWidth="2" /><path d="M28.500 16a12 12 0 0 1-4 9" stroke="#3b464c" fill="none" /><circle cx="22" cy="18" r="1" fill="#dfe6ea" /><path d="M31 27v5h-5z" fill="#303a3c" /></svg>
            </KnobCell>
            <KnobCell $w={38}>
              <svg width="34" height="34" viewBox="0 0 34 34" aria-hidden="true"><circle cx="17" cy="17" r="15" fill="none" stroke="#394445" strokeWidth="2" strokeDasharray="1.500 3" /><circle cx="17" cy="17" r="12" fill="#3b464a" stroke="#2b3538" strokeWidth="2" /><circle cx="17" cy="9" r="1" fill="#dfe6ea" /></svg>
            </KnobCell>
            <Slider>
              <svg width="16" height="17" viewBox="0 0 16 17" aria-hidden="true"><path d="M8 0a7 7 0 0 1 5 12l-5 4-5-4A7 7 0 0 1 8 0z" fill="#2c3535" /><path d="M8 3v9" stroke="#c3cec6" /></svg>
            </Slider>
            <Tools $w={156}>{toolRow(["keyboardPiano", "arrowRight", "slide", "link", "hat"])}</Tools>
            <SnapIcon><Icon name="magnetTipped" size={14} /></SnapIcon>
            <SnapBox><select aria-label="Snap"><option>Line</option></select><Tri size={7} /></SnapBox>
            <PatternBox>
              <PatternStep aria-label="Next pattern"><Tri size={8} /></PatternStep>
              <PatternName><input aria-label="Pattern name" defaultValue="New Pattern" /><Spin /></PatternName>
              <PatternStep>+</PatternStep>
            </PatternBox>
            <Tools $w={314} $gap={7}>{toolRow(["playlist", "pianoRoll", "rack", "mixer", "tree", "docs", "plug", "crane", "hand", "download"])}</Tools>
            <News href="#news"><span><em>12-11</em> FL Studio<br />Mobile | 3.2 Update</span><Tri size={7} /></News>
          </BarRow>
          <BarRow>
            <Lights><i /><i /><i /></Lights>
            <Menu>{["FILE", "EDIT", "ADD", "PATTERNS", "VIEW", "OPTIONS", "TOOLS", "HELP"].map((m) => <a key={m} href={"#" + m}>{m}</a>)}</Menu>
            <Transport>
              <ModeSwitch><Mode>PAT</Mode><Mode $on>SONG</Mode></ModeSwitch>
              <TransportKey aria-label="Play"><Tri size={11} /></TransportKey>
              <TransportKey aria-label="Stop"><svg width="8" height="8" aria-hidden="true"><path d="M0 0h8v8H0z" fill="currentColor" /></svg></TransportKey>
            </Transport>
            <RecordKey aria-label="Record" />
            <Tempo><span>128<small>.000</small></span><Spin /></Tempo>
            <Tools $w={156}>{toolRow(["metronome", "pianoClock", "digits", "pianoPlus", "pianoLoop"])}</Tools>
            <Clock>1:01<ClockTail><sup>B:S:T</sup><small>:00</small></ClockTail></Clock>
            <Scope />
            <PeakCell>
              <PeakScreen />
              <svg width="14" height="9" viewBox="0 0 14 9" aria-hidden="true"><ellipse cx="7" cy="4.500" rx="5" ry="3.500" fill="none" stroke="currentColor" strokeWidth="1.500" /><circle cx="7" cy="4" r="2" fill="currentColor" /></svg>
            </PeakCell>
            <Stats>
              <i /><b>7</b><span>348 MB</span>
              <Polys>0<svg width="14" height="10" viewBox="0 0 14 10" aria-hidden="true"><path d="M0 5c4-5 10-5 14 0-4 5-10 5-14 0zM3 5h8" fill="none" stroke="currentColor" strokeWidth="2" /></svg></Polys>
            </Stats>
            <Tools $w={219} $gap={7}>{toolRow(["undo", "cut", "mic", "help", "save", "saveWave", "chat"])}</Tools>
          </BarRow>
        </TopBar>

        <Main>
          <Browser>
            <BrowserHead>
              <Tri size={7} /><Icon name="up" size={13} /><Icon name="back" size={13} /><Icon name="searchDoc" size={14} />
              <span>Browser - <b>All</b></span><Tri size={6} />
            </BrowserHead>
            <BrowserTabs>
              <button aria-label="Sounds"><Icon name="wave" size={15} /></button>
              <button aria-label="Files"><Icon name="docs" size={15} /></button>
              <button aria-label="Plugins"><Icon name="plugin" size={15} /></button>
            </BrowserTabs>
            <BrowserBody>
              <BrowserTree>
                <CurrentRow><Icon name="docs" size={14} /><span>Current project</span><svg width="8" height="5" aria-hidden="true"><path d="M0 0h8L4 5z" fill="currentColor" /></svg></CurrentRow>
                <EntryList rows={nested} h={112} nest />
                <EntryList rows={library} h={147} />
                <EntryList rows={folders} h={429} />
              </BrowserTree>
            </BrowserBody>
          </Browser>
          <Splitter />

          <PlaylistWindow>
            <TitleBar>
              <TitleTools>
                <TitleTool aria-label="Menu" $space={3}><Tri size={9} /></TitleTool>
                <TitleTool aria-label="Snap" $space={12}><Icon name="magnetTipped" size={16} /></TitleTool>
                <TitleTool aria-label="Draw" $c="#e6b53c"><Icon name="pencil" size={16} /></TitleTool>
                <TitleTool aria-label="Paint"><Icon name="brush" size={16} /></TitleTool>
                <TitleTool aria-label="Delete"><Icon name="ban" size={16} /></TitleTool>
                <TitleTool aria-label="Mute"><Icon name="mute" size={16} /></TitleTool>
                <TitleTool aria-label="Slip"><Icon name="slip" size={16} /></TitleTool>
              </TitleTools>
              <WindowKeys>
                <button aria-label="Minimise"><svg width="10" height="10" aria-hidden="true"><path d="M1 3h7" stroke="currentColor" strokeWidth="2" /></svg></button>
                <button aria-label="Maximise"><svg width="10" height="10" aria-hidden="true"><path d="M1 2h8v6H1z" fill="none" stroke="currentColor" strokeWidth="1.500" /></svg></button>
                <button aria-label="Close"><svg width="10" height="10" aria-hidden="true"><path d="M1 1l8 8M9 1L1 9" stroke="currentColor" strokeWidth="1.500" /></svg></button>
              </WindowKeys>
            </TitleBar>
            <PlaylistBody>
              <Picker>
                <PickerTabs>
                  <button aria-label="Patterns"><Icon name="piano" size={16} /></button>
                  <button aria-label="Audio clips"><Icon name="wave" size={19} /></button>
                </PickerTabs>
                <PickerBox>
                  <PatternList>
                    {patterns.map(([name, c], i) => (
                      <Pattern key={name} $c={c} $on={i === 5}>
                        {i === 5
                          ? <svg width="11" height="12" viewBox="0 0 11 12" aria-hidden="true"><path d="M5 2h5v8H4z" fill="#dbeede" /><path d="M0 0l6 6-6 6z" fill="#e0345a" /></svg>
                          : <Icon name="clip" size={10} />}
                        {name}
                      </Pattern>
                    ))}
                  </PatternList>
                </PickerBox>
                <AddPattern>+</AddPattern>
              </Picker>
              <Arrange>
                <MiniMap>
                  <ScrollKey aria-label="Scroll right"><svg width="8" height="8" aria-hidden="true"><path d="M2 0l4 4-4 4" fill="none" stroke="currentColor" strokeWidth="1.500" /></svg></ScrollKey>
                  <ScrollKey aria-label="Zoom"><svg width="3" height="5" aria-hidden="true"><path d="M0 0h3v5H0z" fill="currentColor" /></svg></ScrollKey>
                </MiniMap>
                <ScrollFace>
                  <Ruler>{Array.from({ length: 26 }, (_, i) => <Bar key={i} $major={i % 2 === 0}>{i * 2 + 1}</Bar>)}</Ruler>
                  <ScrollKey aria-label="Scroll up"><svg width="8" height="8" aria-hidden="true"><path d="M0 6l4-4 4 4" fill="none" stroke="currentColor" strokeWidth="1.500" /></svg></ScrollKey>
                </ScrollFace>
                <TrackArea>
                  <TrackLabels>
                    {upperLanes.map((h, i) => <TrackLabel key={i} $h={h} $c="#49535a" />)}
                    <TrackLabel $h={56} $c="#4a42a8" $ink="#e8e8f4">Bass<TrackDots>...</TrackDots><TrackLed /></TrackLabel>
                    <TrackLabel $h={52} $c="#4a5355" $ink="#7a8486">Track 21<TrackDots>...</TrackDots><TrackLed /></TrackLabel>
                    <TrackLabel $h={52} $c="#4a5355" $ink="#7a8486">Track 22</TrackLabel>
                  </TrackLabels>
                  <Canvas>
                    {Array.from({ length: 52 }, (_, i) => <GridCol key={i} $dark={i % 8 > 3} />)}
                    <Lanes>
                      {laneHeights.map((h, i) => (
                        <Lane key={i} $h={h}>
                          {clips[i] && <Clip $head={clips[i][1]} $body={clips[i][2]}><span>{clips[i][0]}</span></Clip>}
                        </Lane>
                      ))}
                    </Lanes>
                  </Canvas>
                  <VScroll>
                    <ScrollKey aria-label="Scroll down"><svg width="8" height="8" aria-hidden="true"><path d="M0 2l4 4 4-4" fill="none" stroke="currentColor" strokeWidth="1.500" /></svg></ScrollKey>
                  </VScroll>
                </TrackArea>
              </Arrange>
            </PlaylistBody>
            <MixerStrip>
              <Target>
                <svg width="15" height="15" viewBox="0 0 15 15" aria-hidden="true"><circle cx="7.500" cy="7.500" r="6.500" fill="none" stroke="currentColor" strokeWidth="1.500" /><path d="M7.500 4v4H10" fill="none" stroke="currentColor" /></svg>
                <span>(none)</span><Tri size={7} />
              </Target>
              <Master><svg width="18" height="13" viewBox="0 0 18 13" aria-hidden="true"><path d="M5 5l4-5 4 5-4-2z" fill="currentColor" /><path d="M2 13a7 6 0 0 1 14 0" fill="none" stroke="currentColor" strokeWidth="2" /></svg></Master>
              {inserts.map((c, i) => (
                <Insert key={i} $c={c} $on={i === 9}>
                  {(i === 1 || i === 3) && <svg width="7" height="5" aria-hidden="true"><path d="M0 5l3.500-4L7 5 3.500 4z" fill="currentColor" /></svg>}
                </Insert>
              ))}
            </MixerStrip>
          </PlaylistWindow>
        </Main>

        <StudioDialog>
          <StudioDialogHead>
            <Icon name="docs" size={13} /><span>Select the directory where your project data is to be stored...</span>
            <button aria-label="Close"><svg width="10" height="10" aria-hidden="true"><path d="M1 1l8 8M9 1L1 9" stroke="currentColor" strokeWidth="1.500" /></svg></button>
          </StudioDialogHead>
          <StudioDialogBody />
        </StudioDialog>

        <Chooser>
          <ChooserBar>
            <MacKey $w={23} aria-label="Back"><svg width="8" height="12" aria-hidden="true"><path d="M7 1L2 6l5 5" fill="none" stroke="#999" strokeWidth="1.500" /></svg></MacKey>
            <MacKey $w={23} $gap={2} aria-label="Forward"><svg width="8" height="12" aria-hidden="true"><path d="M1 1l5 5-5 5" fill="none" stroke="#999" strokeWidth="1.500" /></svg></MacKey>
            <MacKey $w={42} $gap={8} aria-label="View"><svg width="26" height="12" aria-hidden="true"><path d="M0 1.500h14M0 4.500h14M0 7.500h14M0 10.500h14" stroke="currentColor" /><path d="M18 4l3 3 3-3" fill="none" stroke="currentColor" strokeWidth="1.500" /></svg></MacKey>
            <MacKey $w={42} $gap={6} aria-label="Group"><svg width="18" height="13" viewBox="0 0 18 13" aria-hidden="true"><path d="M12 2.500H6L5 1H1v11h13V6M1 4.500h11M15 1v5M12.500 3.500h5" fill="none" stroke="currentColor" /></svg></MacKey>
            <PlaceBox>
              <BlueFolder />
              <PlaceSelect aria-label="Folder"><option>Projects</option></PlaceSelect>
              <svg width="9" height="13" aria-hidden="true"><path d="M1 5l3.500-4L8 5M1 8l3.500 4L8 8" fill="none" stroke="#444" strokeWidth="1.500" /></svg>
            </PlaceBox>
            <SearchBox>
              <svg width="13" height="13" aria-hidden="true"><circle cx="5.500" cy="5.500" r="4.500" fill="none" stroke="currentColor" /><path d="M9 9l4 4" stroke="currentColor" strokeWidth="1.500" /></svg>
              <input type="search" placeholder="Search" aria-label="Search" />
            </SearchBox>
          </ChooserBar>
          <ChooserBody>
            <Places>
              <PlacesTitle>Favourites</PlacesTitle>
              <PlacesList>
                <li><Desktop />Desktop</li>
                <li><Documents />Documents</li>
                <li><Applications />Applications</li>
                <li><Downloads />Downloads</li>
                {places.map((p) => <li key={p}><GreyFolder />{p}</li>)}
              </PlacesList>
              <PlacesTitle>iCloud</PlacesTitle>
              <PlacesList>
                <li><svg width="16" height="12" viewBox="0 0 16 12" aria-hidden="true"><path d="M4 11a3.500 3.500 0 0 1 0-7 4 4 0 0 1 8-1 4 4 0 0 1 1 8z" fill="none" stroke="currentColor" /></svg>iCloud Drive</li>
              </PlacesList>
            </Places>
            <Files>
              <FileTable>
                <colgroup><col /><col width="93" /><col width="110" /><col width="7" /></colgroup>
                <thead><tr><th>Name</th><th>Size</th><th>Kind</th><th aria-label="More" /></tr></thead>
                <tbody>
                  {Array.from({ length: 17 }, (_, i) => {
                    const name = ["Project bones", "Backup", "Templates"][i];
                    return (
                      <tr key={i}>
                        <td>{name && <FileName><Tri size={9} /><BlueFolder />{name}</FileName>}</td>
                        <td>{name && "--"}</td><td>{name && "Folder"}</td><td />
                      </tr>
                    );
                  })}
                </tbody>
              </FileTable>
              <HScroll />
            </Files>
          </ChooserBody>
          <ChooserFoot>
            <FootKey $w={92}>New Folder</FootKey>
            <FootKey $w={73}>Cancel</FootKey>
            <FootKey $w={74} $main>Open</FootKey>
          </ChooserFoot>
        </Chooser>

        <PlayButton aria-label="Play video">
          <svg width="66" height="74" viewBox="0 0 66 74" aria-hidden="true"><path d="M1 1l64 36L1 73z" fill="#050505" /></svg>
        </PlayButton>
        <Cursor>
          <svg width="42" height="42" viewBox="0 0 42 42" aria-hidden="true">
            <g fill="#fff" stroke="#16242b" strokeWidth="2" paintOrder="stroke">
              <path d="M21 1l7 7.500h-6v7h-2v-7h-6zM21 41l7-7.500h-6v-7h-2v7h-6zM1 21l7.500-7v6h7v2h-7v6zM41 21l-7.500-7v6h-7v2h7v6z" />
              <circle cx="21" cy="21" r="5.500" fill="#2e4450" stroke="#fff" strokeWidth="2" />
            </g>
          </svg>
        </Cursor>
      </Studio>
    </Page>
  );
}
